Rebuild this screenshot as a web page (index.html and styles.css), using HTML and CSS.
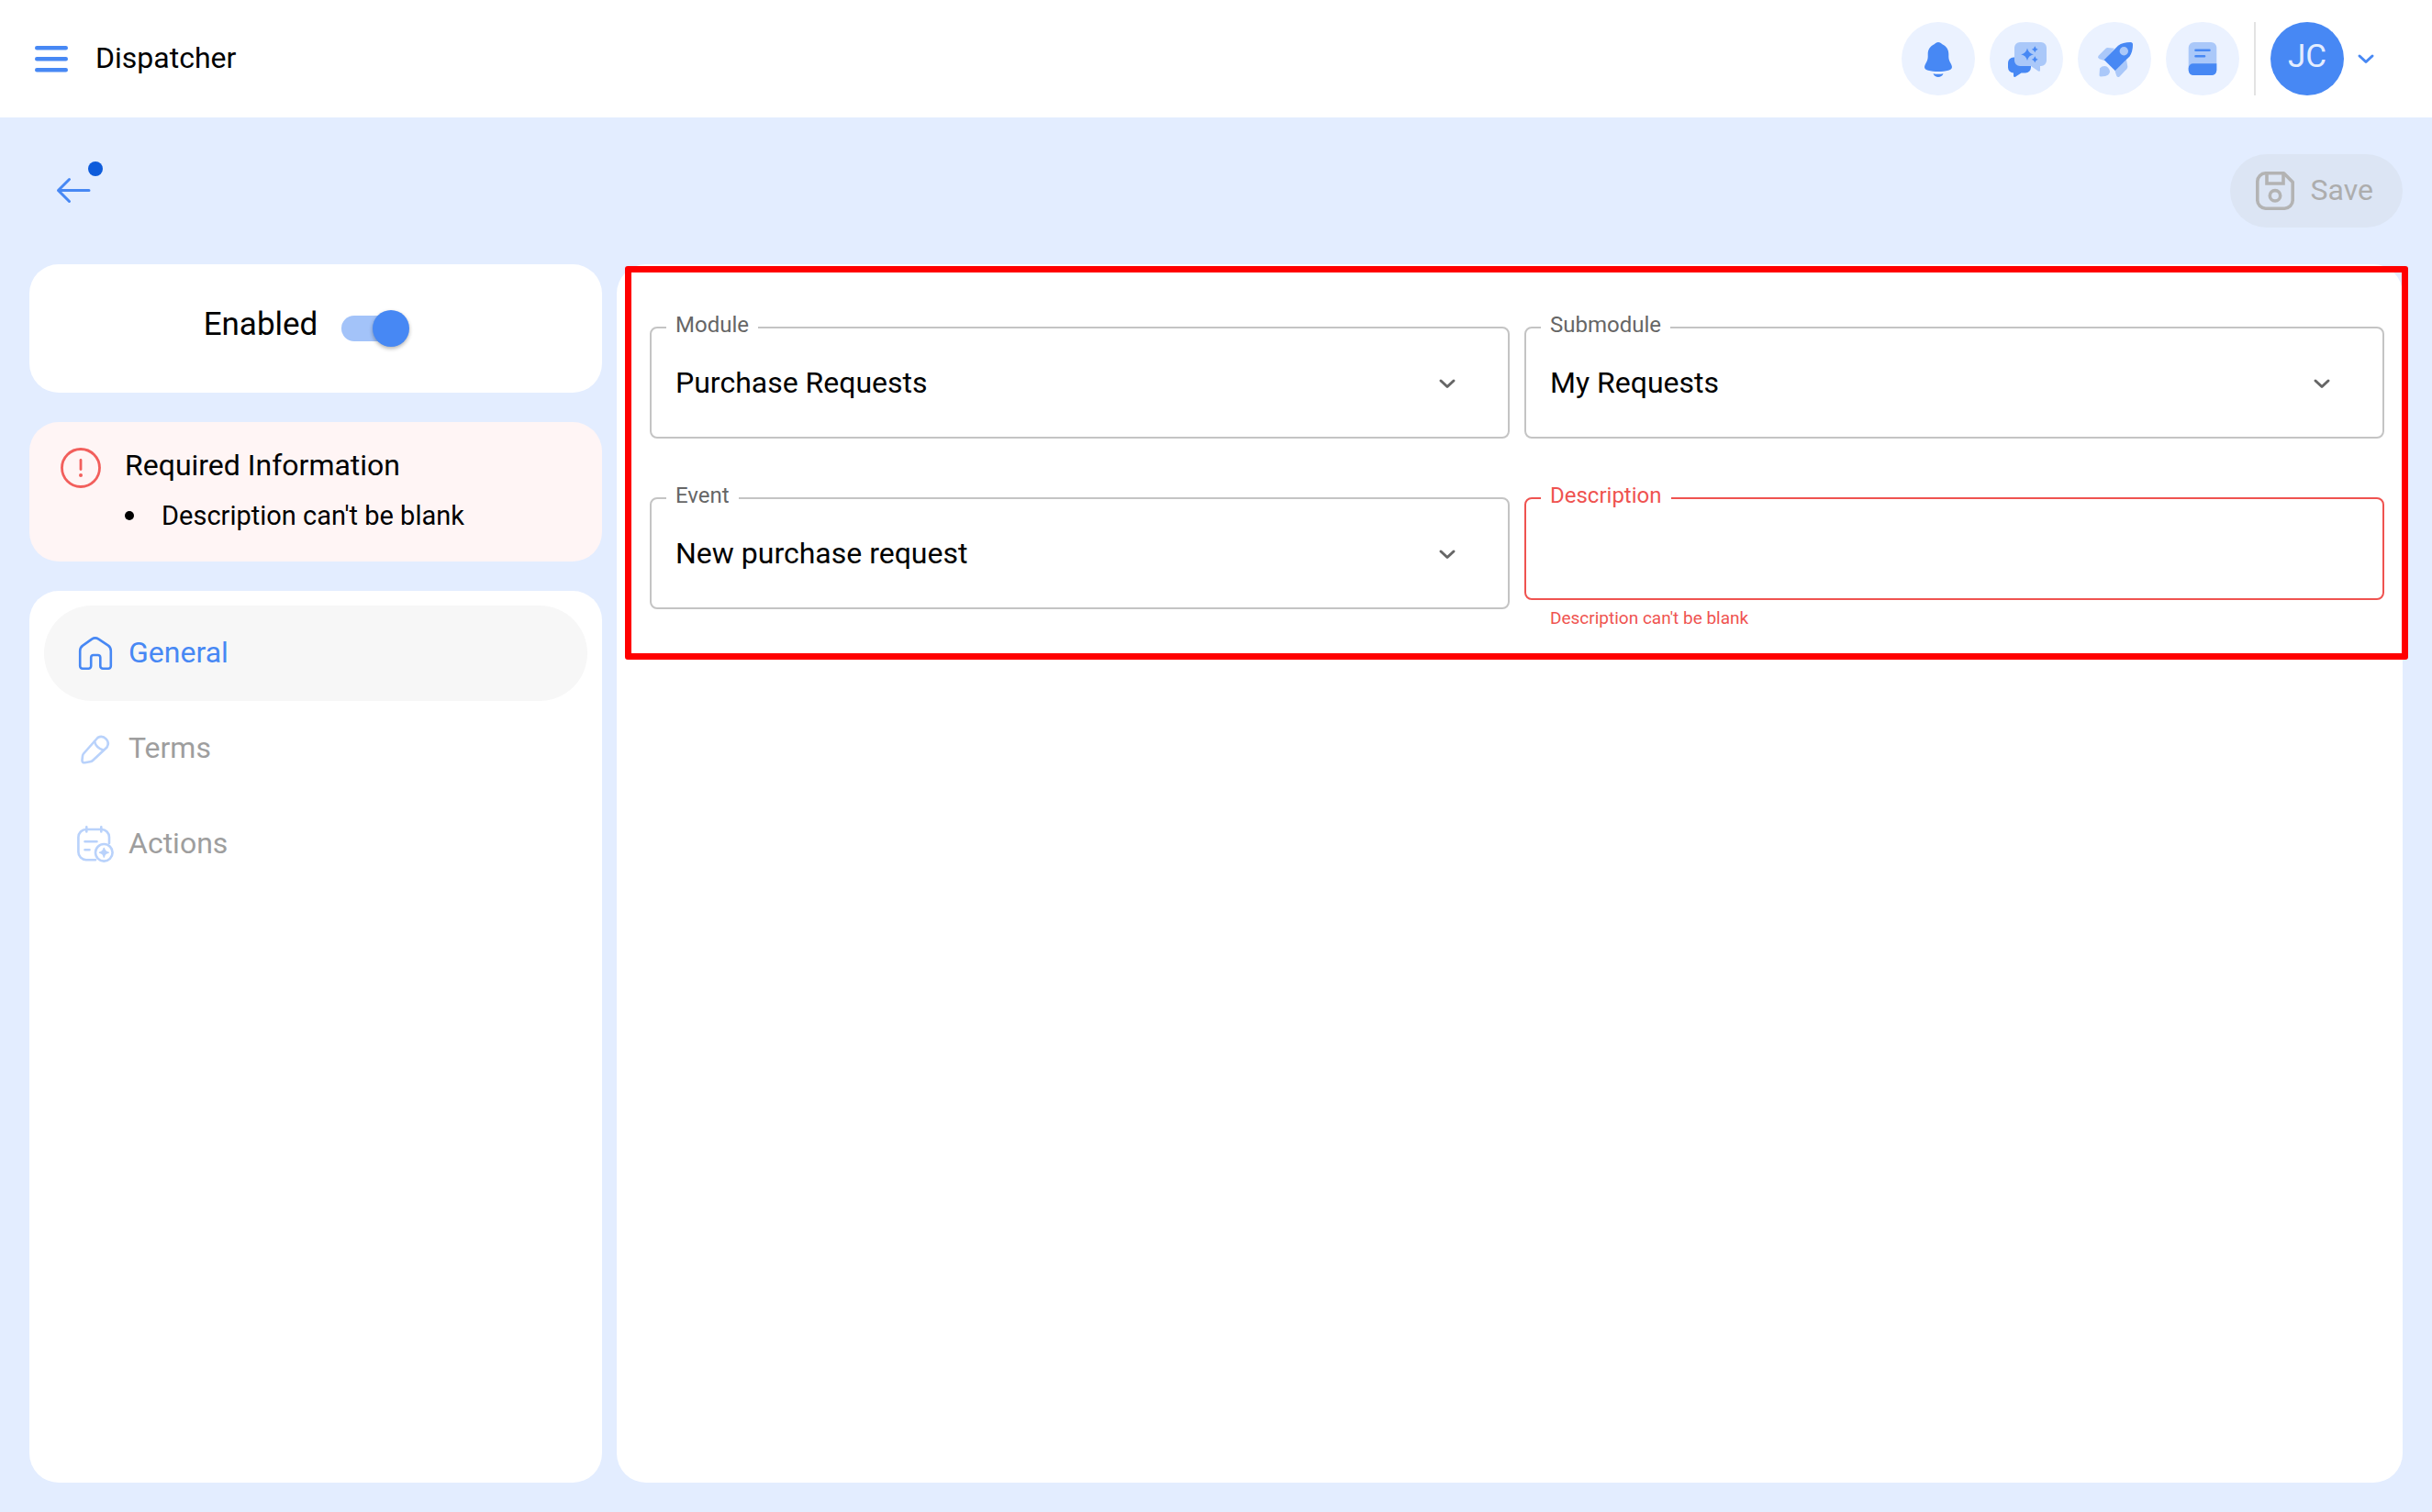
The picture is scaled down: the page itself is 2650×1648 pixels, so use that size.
FILE: index.html
```
<!DOCTYPE html>
<html lang="en">
<head>
  <meta charset="UTF-8" />
  <title>Dispatcher</title>
  <link rel="stylesheet" href="styles.css">
</head>
<body>
  <header class="topbar">
    <button class="icon-button menu-button" aria-label="Menu">
      <svg width="40" height="40" viewBox="0 0 40 40" fill="none" stroke="#4788f4" stroke-width="4.400" stroke-linecap="round">
        <path d="M4.200 8.200H35.800M4.200 20.200H35.800M4.200 32.200H35.800" />
      </svg>
    </button>
    <h1 class="title text">Dispatcher</h1>
    <div class="topbar-actions">
      <button class="round-button" aria-label="Notifications">
        <svg width="48" height="48" viewBox="-4 -4 48 48" fill="#4788f4">
          <path d="M20 2C18 2 17 3 16 4C11 6.500 8.700 10 8.700 15V18C8.700 21 7.500 23 6.200 25.500C4 29.500 5 31.500 9 32.700C15 34.500 25 34.500 31 32.700C35 31.500 36 29.500 33.800 25.500C32.500 23 31.300 21 31.300 18V15C31.300 10 29 6.500 24 4C23 3 22 2 20 2Z" />
          <path d="M14.500 36.200Q20 37.200 25.500 36.200C24.500 38.800 22.500 40 20 40S15.500 38.800 14.500 36.200Z" />
        </svg>
      </button>
      <button class="round-button" aria-label="Assistant chat">
        <svg width="48" height="48" viewBox="-2 -2 48 48" fill="#4788f4">
          <path d="M8 20.500H21A6 6 0 0 1 27 26.500V31.500A6 6 0 0 1 21 37.500H16.500L10 41.700Q8 42.500 8 40.500V37.500A6 6 0 0 1 2 31.500V26.500A6 6 0 0 1 8 20.500Z" />
          <path fill="#aac8f9" d="M15 4H38A6 6 0 0 1 44 10V24A6 6 0 0 1 38 30H37V34.500Q37 36.500 35 35.500L27 30H15A6 6 0 0 1 9 24V10A6 6 0 0 1 15 4Z" />
          <path d="M23 10.500Q24.300 16 29.800 17.300Q24.300 18.600 23 24.100Q21.700 18.600 16.200 17.300Q21.700 16 23 10.500Z" />
          <path d="M31.300 8.200Q32 11 34.800 11.700Q32 12.400 31.300 15.200Q30.600 12.400 27.800 11.700Q30.600 11 31.300 8.200Z" />
          <path d="M31.300 19.200Q32 22 34.800 22.700Q32 23.400 31.300 26.200Q30.600 23.400 27.800 22.700Q30.600 22 31.300 19.200Z" />
        </svg>
      </button>
      <button class="round-button" aria-label="What's new">
        <svg width="48" height="48" viewBox="0 0 48 48" fill="#aac8f9">
          <path d="M24 12.700L16.500 12Q15.300 12 14.300 13L6.800 20.500Q5.200 22.700 7.500 24.200L13 26Z" />
          <path d="M37 25L38.300 32.500Q38.400 34 37.300 35.200L29.500 43.400Q27.500 45 26.200 42.500L24.300 36.500Z" />
          <path d="M8 34.500Q11.500 31 15.500 32.500Q19 35 19 38.500Q18 42 14 43L9 43.500Q7.300 43.500 7.500 41.500Z" />
          <path fill="#4788f4" d="M12.700 25.300L28 9.700Q33 6 41.500 6Q44 6 44 8.500Q44 16.500 40.500 21.500L24.700 37Z" />
          <circle cx="34.300" cy="15.700" r="4.700" />
        </svg>
      </button>
      <button class="round-button" aria-label="Documentation">
        <svg width="48" height="48" viewBox="0 0 48 48">
          <rect x="8.700" y="6" width="30.600" height="36" rx="6" fill="#aac8f9" />
          <path fill="#4788f4" d="M39.300 29.300V36.500A5.500 5.500 0 0 1 33.800 42H14.200A5.500 5.500 0 0 1 8.700 36.500V34.300A5 5 0 0 1 13.700 29.300Z" />
          <path fill="none" stroke="#4788f4" stroke-width="2.600" stroke-linecap="round" d="M16.500 14.800H31.500M16.500 21.300H26" />
        </svg>
      </button>
      <span class="divider"></span>
      <button class="user-menu" aria-label="User menu">
        <span class="avatar">JC</span>
        <svg width="24" height="24" viewBox="0 0 24 24" fill="none" stroke="#4788f4" stroke-width="3" stroke-linecap="round" stroke-linejoin="round">
          <path d="M5 9L12 15.500L19 9" />
        </svg>
      </button>
    </div>
  </header>

  <div class="toolbar">
    <button class="icon-button back-button" aria-label="Back">
      <svg width="40" height="40" viewBox="0 0 40 40" fill="none" stroke="#4788f4" stroke-width="3" stroke-linecap="round" stroke-linejoin="round">
        <path d="M15.500 7.500L3.500 19.500L15.500 31.500M3.500 19.500H37" />
      </svg>
      <span class="dot"></span>
    </button>
    <button class="save-button" disabled>
      <svg width="42" height="42" viewBox="0 0 42 42" fill="none" stroke="#b3b3b3" stroke-width="3.600">
        <path stroke-linejoin="round" d="M11 1.800H30.500L40.200 11.500V31A9 9 0 0 1 31 40.200H11A9 9 0 0 1 1.800 31V11A9 9 0 0 1 11 1.800Z" />
        <path d="M12 2V13H30V2" />
        <circle cx="21" cy="26.300" r="5.700" />
      </svg>
      <span class="text">Save</span>
    </button>
  </div>

  <main class="layout">
    <aside class="sidebar">
      <section class="card enabled-card">
        <label for="enabled">Enabled</label>
        <input type="checkbox" role="switch" class="switch" id="enabled" checked>
      </section>

      <section class="card required-card">
        <svg class="alert-icon" width="48" height="48" viewBox="0 0 48 48" fill="none" stroke="#f25f5c" stroke-width="2.800" stroke-linecap="round">
          <circle cx="24" cy="24" r="20.500" />
          <path d="M24 15.500V25.500" />
          <circle cx="24" cy="32" r="2" fill="#f25f5c" stroke="none" />
        </svg>
        <div>
          <h2 class="required-title">Required Information</h2>
          <ul class="required-list">
            <li>Description can't be blank</li>
          </ul>
        </div>
      </section>

      <nav class="card nav">
        <a href="#general" class="nav-item active">
          <svg width="40" height="40" viewBox="0 0 40 40">
            <path d="M3.200 17.500C3.200 15 4.200 13 6.200 11.600L16 4.600Q19.700 2.200 23.500 4.600L34 11.600C36 13 36.800 15 36.800 17.500V34A2.700 2.700 0 0 1 34 36.700H28.300A2.700 2.700 0 0 1 25.300 34V24.500A2.700 2.700 0 0 0 22.500 22H18A2.700 2.700 0 0 0 15.200 24.500V34A2.700 2.700 0 0 1 12.300 36.700H6A2.700 2.700 0 0 1 3.200 34Z" />
          </svg>
          <span class="text">General</span>
        </a>
        <a href="#terms" class="nav-item">
          <svg width="40" height="40" viewBox="0 0 40 40">
            <path d="M7 25.500L22.500 8A7.500 7.500 0 0 1 32.500 18.500L17.500 32.500Q16 34 14 34.300L8.500 35.200Q5.300 35.500 5.500 32.500L6 28Q6.200 26.500 7 25.500Z" />
            <path d="M19 12Q20.500 19 28.500 21.500" />
          </svg>
          <span class="text">Terms</span>
        </a>
        <a href="#actions" class="nav-item">
          <svg width="40" height="40" viewBox="0 0 40 40">
            <path d="M20 37.200H10A8.500 8.500 0 0 1 1.400 28.500V12.500A8.500 8.500 0 0 1 10 4H26.500A8.500 8.500 0 0 1 35 12.500V19" />
            <path d="M10.300 1.400V6.500M26.300 1.400V6.500M8.500 17.200H21.500M8.500 26.200H13.500" />
            <circle cx="29.300" cy="29.300" r="9.300" />
            <path fill="#b9d2fb" stroke-width="1.500" d="M29.300 24.500Q30 28.600 34.100 29.300Q30 30 29.300 34.100Q28.600 30 24.500 29.300Q28.600 28.600 29.300 24.500Z" />
          </svg>
          <span class="text">Actions</span>
        </a>
      </nav>
    </aside>

    <section class="card content">
      <form class="form">
        <div class="field">
          <select id="module">
            <option>Purchase Requests</option>
          </select>
          <label for="module">Module</label>
          <svg class="chevron" width="24" height="24" viewBox="0 0 24 24"><path d="M5 9L12 15.500L19 9" /></svg>
        </div>
        <div class="field">
          <select id="submodule">
            <option>My Requests</option>
          </select>
          <label for="submodule">Submodule</label>
          <svg class="chevron" width="24" height="24" viewBox="0 0 24 24"><path d="M5 9L12 15.500L19 9" /></svg>
        </div>
        <div class="field">
          <select id="event">
            <option>New purchase request</option>
          </select>
          <label for="event">Event</label>
          <svg class="chevron" width="24" height="24" viewBox="0 0 24 24"><path d="M5 9L12 15.500L19 9" /></svg>
        </div>
        <div class="field error">
          <input type="text" id="description" aria-describedby="description-error">
          <label for="description">Description</label>
          <p class="helper" id="description-error">Description can't be blank</p>
        </div>
        <div class="highlight"></div>
      </form>
    </section>
  </main>
</body>
</html>
```

FILE: styles.css
```
* {
  box-sizing: border-box;
}
body {
  font-family: Roboto, "Liberation Sans", sans-serif;
  font-size: 32px;
  color: #000;
  display: flex;
  flex-direction: column;
  min-height: 100vh;
  margin: 0;
  background-color: #e3edff;
}
button, input, select {
  font: inherit;
  color: inherit;
  margin: 0;
}
button {
  border: none;
  background: none;
  padding: 0;
  cursor: pointer;
}
h1, h2, p, ul {
  margin: 0;
  padding: 0;
  font-weight: 400;
}
svg {
  display: block;
  flex-shrink: 0;
}
.text {
  padding-bottom: 3px;
}

/* top bar */
.topbar {
  display: flex;
  align-items: center;
  height: 128px;
  padding: 0 60px 0 36px;
  background-color: #fff;
}
.title {
  font-size: 32px;
  margin-left: 28px;
}
.topbar-actions {
  display: flex;
  align-items: center;
  gap: 16px;
  margin-left: auto;
}
.round-button {
  display: flex;
  justify-content: center;
  align-items: center;
  width: 80px;
  height: 80px;
  border-radius: 50%;
  background-color: #ebf2ff;
}
.divider {
  width: 2px;
  height: 80px;
  background-color: #e3e3e3;
}
.user-menu {
  display: flex;
  align-items: center;
  gap: 12px;
}
.avatar {
  width: 80px;
  height: 80px;
  line-height: 76px;
  border-radius: 50%;
  text-align: center;
  font-size: 35px;
  color: #e3edff;
  background-color: #4788f4;
}

/* back / save */
.toolbar {
  display: flex;
  justify-content: space-between;
  align-items: center;
  padding: 40px 32px;
}
.back-button {
  position: relative;
  margin-left: 28px;
}
.dot {
  position: absolute;
  top: -12px;
  right: -12px;
  width: 16px;
  height: 16px;
  border-radius: 50%;
  background-color: #0e5cdb;
}
.save-button {
  display: flex;
  align-items: center;
  gap: 18px;
  height: 80px;
  padding: 0 32px 0 28px;
  border-radius: 40px;
  color: #adadad;
  background-color: #dce5f4;
}

/* page layout */
.layout {
  flex: 1;
  display: flex;
  gap: 16px;
  padding: 0 32px 32px;
}
.sidebar {
  flex: 0 0 624px;
  display: flex;
  flex-direction: column;
  gap: 32px;
}
.card {
  border-radius: 32px;
  background-color: #fff;
}
.content {
  flex: 1;
}

/* enabled switch */
.enabled-card {
  display: flex;
  justify-content: center;
  gap: 24px;
  padding: 50px 20px 50px 0;
}
.enabled-card label {
  font-size: 35px;
  line-height: 32px;
}
.switch {
  appearance: none;
  position: relative;
  width: 76px;
  height: 40px;
  cursor: pointer;
}
.switch::before {
  content: "";
  position: absolute;
  top: 6px;
  left: 2px;
  width: 68px;
  height: 28px;
  border-radius: 14px;
  background-color: #a3c3f9;
}
.switch::after {
  content: "";
  position: absolute;
  right: 0;
  width: 40px;
  height: 40px;
  border-radius: 50%;
  background-color: #4788f4;
  box-shadow: 0 2px 4px rgba(0,0,0,0.3);
}

/* required information */
.required-card {
  display: flex;
  gap: 24px;
  padding: 24px 32px 28px;
  background-color: #fff5f5;
}
.alert-icon {
  margin-top: 2px;
}
.required-title {
  font-size: 32px;
  line-height: 46px;
}
.required-list {
  list-style: none;
  margin-top: 10px;
  font-size: 29px;
  line-height: 44px;
}
.required-list li {
  display: flex;
  align-items: center;
  gap: 30px;
}
.required-list li::before {
  content: "";
  width: 10px;
  height: 10px;
  border-radius: 50%;
  background-color: #000;
}

/* side navigation */
.nav {
  flex: 1;
  padding: 16px;
}
.nav-item {
  display: flex;
  align-items: center;
  gap: 16px;
  height: 104px;
  padding: 0 36px;
  border-radius: 52px;
  color: #9e9e9e;
  text-decoration: none;
}
.nav-item svg {
  fill: none;
  stroke: #b9d2fb;
  stroke-width: 2.6;
  stroke-linecap: round;
  stroke-linejoin: round;
}
.nav-item.active {
  color: #4788f4;
  background-color: #f7f7f7;
}
.nav-item.active svg {
  stroke: #4788f4;
}

/* form */
.form {
  position: relative;
  display: grid;
  grid-template-columns: 1fr 1fr;
  gap: 64px 16px;
  padding: 68px 20px 54px 36px;
}
.field {
  position: relative;
}
.field select,
.field input {
  display: block;
  appearance: none;
  width: 100%;
  height: 122px;
  padding: 0 80px 0 26px;
  border: 2px solid #c4c4c4;
  border-radius: 8px;
  outline: none;
  background-color: #fff;
}
.field input {
  height: 112px;
}
.field label {
  position: absolute;
  top: -16px;
  left: 18px;
  padding: 0 10px;
  font-size: 24px;
  line-height: 28px;
  color: #666;
  background-color: #fff;
}
.chevron {
  position: absolute;
  top: 50px;
  right: 56px;
  fill: none;
  stroke: #666;
  stroke-width: 3;
  stroke-linecap: round;
  stroke-linejoin: round;
  pointer-events: none;
}
.field.error input {
  border-color: #ef5350;
}
.field.error label,
.helper {
  color: #ef5350;
}
.helper {
  position: absolute;
  top: 120px;
  left: 28px;
  font-size: 19px;
  line-height: 24px;
}
.highlight {
  position: absolute;
  top: 2px;
  right: -6px;
  bottom: -1px;
  left: 9px;
  border: 7px solid #f00;
  border-radius: 3px;
  pointer-events: none;
}
```
